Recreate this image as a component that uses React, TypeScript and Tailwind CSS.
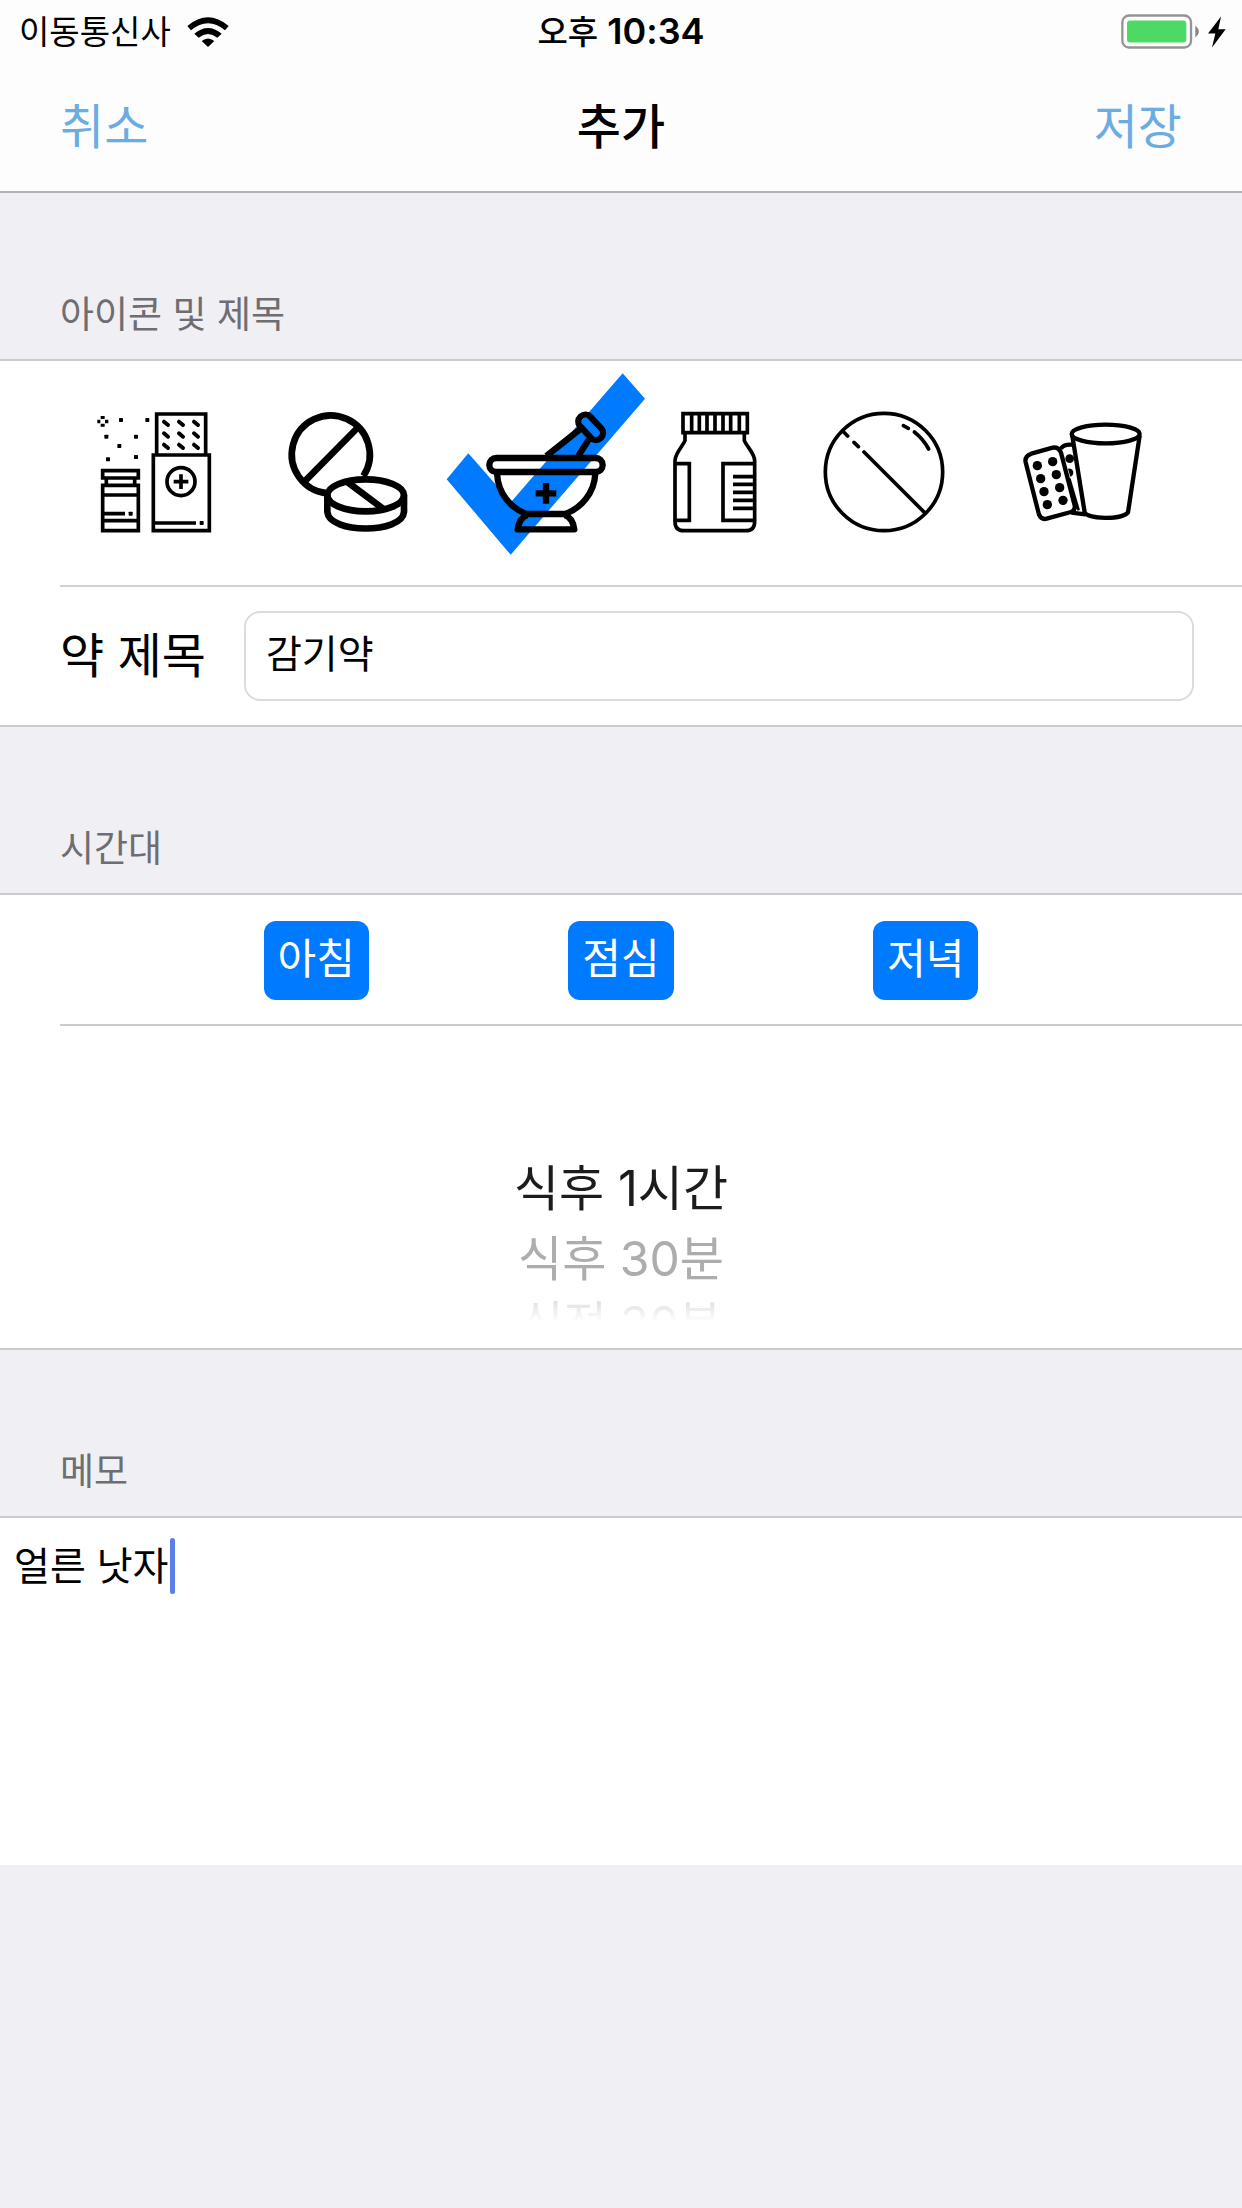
import { useState } from "react";
import type { ReactNode } from "react";

type IconProps = { viewBox: string; width: number; children: ReactNode };

function LineIcon({ viewBox, width, children }: IconProps) {
  return (
    <svg
      viewBox={viewBox}
      className="size-[120px] overflow-visible"
      fill="none"
      stroke="#000"
      strokeWidth={width}
      aria-hidden="true"
    >
      {children}
    </svg>
  );
}

const powderDots = [
  [123, 86],
  [202, 86],
  [79, 136],
  [168, 136],
  [118, 164],
  [84, 204],
  [168, 197],
  [152, 367],
  [365, 395],
];

const blisterDots = [
  [112, 223],
  [158, 211],
  [122, 262],
  [169, 250],
  [132, 301],
  [179, 289],
  [142, 340],
  [189, 327],
];

function MedicineBox() {
  return (
    <LineIcon viewBox="42 62 360 360" width={11}>
      <path d="M230 190V68H377V190M220 191H388V418H220ZM222 395H348" />
      <path d="M68 238H175V260H68ZM79 260V280M164 260V280M68 282H175V418H68ZM68 311H175M68 388H175M70 367H135" />
      <circle cx="303" cy="271" r="42" />
      <path d="M303 249V293M281 271H325" />
      {[96, 131, 165].map((y) =>
        [258, 303, 348].map((x) => (
          <path key={`${x}-${y}`} d={`M${x - 6} ${y - 5}L${x + 6} ${y + 5}`} strokeWidth="12" strokeLinecap="round" />
        )),
      )}
      <g fill="#000" stroke="none">
        {powderDots.map(([x, y]) => (
          <rect key={`${x}-${y}`} x={x - 6} y={y - 6} width="12" height="12" rx="2" />
        ))}
        <path d="M62 74H74V83H62ZM62 97H74V106H62ZM52 85H61V96H52ZM75 85H85V96H75Z" />
      </g>
    </LineIcon>
  );
}

function Tablets() {
  return (
    <LineIcon viewBox="54 62 360 360" width={20}>
      <path d="M172 306A117 117 0 1 1 280 254M104 270L262 110" />
      <ellipse cx="287" cy="312" rx="115" ry="48" />
      <path d="M172 312V362C178 428 396 428 402 362V312M232 272L347 358" />
    </LineIcon>
  );
}

function Mortar({ checked }: { checked: boolean }) {
  return (
    <LineIcon viewBox="138 152 360 360" width={19}>
      {checked && <path d="M548 36L615 112L212 580L20 354L85 276L213 422Z" fill="#007aff" stroke="none" />}
      <rect x="148" y="290" width="340" height="42" rx="21" />
      <path d="M171 336C174 396 211 440 260 458H375C424 440 463 396 466 336" />
      <path d="M262 461C244 467 236 483 233 504H403C400 483 392 467 374 461" strokeLinejoin="round" />
      <path d="M319 284L421 203M415 284L446 235" />
      <path d="M318 365V427M287 396H349" />
      <rect x="-44" y="-21" width="88" height="42" rx="20" transform="translate(452 198) rotate(47)" />
    </LineIcon>
  );
}

function Bottle() {
  return (
    <LineIcon viewBox="15 62 360 360" width={11}>
      <path d="M99 67H292V124H99ZM125 67V124M148 67V124M171 67V124M195 67V124M219 67V124M242 67V124M268 67V124" />
      <path d="M105 126V148C98 165 75 186 75 208V391Q75 418 102 418H287Q314 418 314 391V208C314 186 290 165 283 148V126" />
      <path d="M77 217H118V387H77M312 217H219V387H312M249 256H312M249 279H312M249 303H312M249 327H312M249 351H312" />
    </LineIcon>
  );
}

function RoundPill() {
  return (
    <LineIcon viewBox="522 62 360 360" width={11}>
      <circle cx="702" cy="242" r="176" />
      <g strokeLinecap="round">
        <path d="M578 119L593 134M612 153L625 166M642 182L824 364" />
        <path d="M760 103L775 111M793 122Q819 142 836 173" />
      </g>
    </LineIcon>
  );
}

function CupAndBlister() {
  return (
    <LineIcon viewBox="69 62 360 360" width={13}>
      <path d="M183 172Q190 158 218 160M214 364L256 369" />
      <g fill="#000" stroke="none">
        <circle cx="209" cy="202" r="13" />
        <path d="M204 232A12 12 0 0 1 211 256Z" />
      </g>
      <path
        d="M94 187L158 169Q176 165 183 184L224 342Q227 356 213 362L140 382Q124 386 117 370L77 213Q73 195 94 187Z"
        fill="#fff"
      />
      <path d="M208 262L236 357" strokeWidth="8" />
      <path d="M218 140L254 363C262 384 366 386 384 363L418 140Z" fill="#fff" />
      <ellipse cx="317" cy="128" rx="102" ry="28" fill="#fff" />
      <g fill="#000" stroke="none">
        {blisterDots.map(([x, y]) => (
          <circle key={`${x}-${y}`} cx={x} cy={y} r="14" />
        ))}
      </g>
    </LineIcon>
  );
}

function StatusBar() {
  return (
    <div className="grid grid-cols-3 items-center px-4 pt-2 leading-[46px]">
      <div className="flex items-center gap-4 pl-[3px]">
        <span className="text-[33px]">이동통신사</span>
        <svg viewBox="568 44 124 90" className="h-[30px] w-[42px]" fill="#000" aria-label="Wi-Fi">
          <path d="M568 71Q630 19 692 71L681 84Q630 42 579 84Z" />
          <path d="M589 94Q630 60 671 94L658 106Q630 84 602 106Z" />
          <path d="M611 116Q630 101 649 116L630 134Z" />
        </svg>
      </div>
      <div className="text-center text-[36px] font-semibold">
        <span className="text-[33px] font-medium">오후</span> 10:34
      </div>
      <div className="flex items-center justify-end">
        <svg viewBox="846 38 315 104" className="h-[35px] w-[105px]" aria-label="배터리 충전 중">
          <rect x="850" y="42" width="206" height="96" rx="20" fill="#fff" stroke="#949494" strokeWidth="7" />
          <rect x="864" y="57" width="178" height="66" rx="9" fill="#4cd964" />
          <path d="M1069 72Q1090 90 1069 108Z" fill="#868686" />
          <path d="M1146 45L1107 96H1129L1119 138L1160 83H1138Z" fill="#000" />
        </svg>
      </div>
    </div>
  );
}

function SectionTitle({ id, children }: { id: string; children: ReactNode }) {
  return (
    <h2 id={id} className="px-[60px] pt-[100px] pb-[22px] text-[37px] leading-[44px] text-[#6d6d72]">
      {children}
    </h2>
  );
}

const icons = ["가루약", "알약 두 개", "막자사발", "약병", "둥근 알약", "물약 컵"];
const times = ["아침", "점심", "저녁"];

export default function App() {
  const [icon, setIcon] = useState(2);
  const [title, setTitle] = useState("감기약");
  const [memo, setMemo] = useState("얼른 낫자");
  const [active, setActive] = useState([true, true, true]);
  const drawings = [
    <MedicineBox />,
    <Tablets />,
    <Mortar checked={icon === 2} />,
    <Bottle />,
    <RoundPill />,
    <CupAndBlister />,
  ];

  return (
    <div className="min-h-screen bg-[#efeff4] font-['Inter','Noto_Sans_CJK_KR',sans-serif] text-black">
      <header className="border-b-2 border-[#b2b2b4] bg-[#fdfdfd]">
        <StatusBar />
        <nav className="grid grid-cols-3 items-center px-[60px] pt-10 pb-8 text-[48px] leading-[64px]">
          <button type="button" className="justify-self-start text-[#6bade1]">
            취소
          </button>
          <h1 className="text-center font-medium">추가</h1>
          <button type="button" className="justify-self-end text-[#6bade1]">
            저장
          </button>
        </nav>
      </header>

      <main>
        <section aria-labelledby="icon-title">
          <SectionTitle id="icon-title">아이콘 및 제목</SectionTitle>
          <div className="border-y-2 border-[#cbcacf] bg-white">
            <div className="grid grid-cols-[194fr_194fr_202fr_136fr_202fr_196fr] pt-[51px] pr-[61px] pb-[53px] pl-[57px]">
              {drawings.map((drawing, i) => (
                <button
                  key={icons[i]}
                  type="button"
                  aria-label={icons[i]}
                  aria-pressed={icon === i}
                  onClick={() => setIcon(i)}
                  className="flex justify-center"
                >
                  {drawing}
                </button>
              ))}
            </div>
            <div className="ml-[60px] flex items-center gap-[38px] border-t-2 border-[#d2d2d4] py-6 pr-12">
              <label htmlFor="medicine" className="text-[48px] leading-[64px]">
                약 제목
              </label>
              <input
                id="medicine"
                value={title}
                onChange={(e) => setTitle(e.target.value)}
                className="h-[90px] min-w-0 flex-1 rounded-2xl border-2 border-[#dcdcdc] bg-white px-5 pb-[10px] text-[39px] outline-none"
              />
            </div>
          </div>
        </section>

        <section aria-labelledby="time-title">
          <SectionTitle id="time-title">시간대</SectionTitle>
          <div className="border-y-2 border-[#cbcacf] bg-white">
            <div className="flex justify-evenly px-16 pt-[26px] pb-6">
              {times.map((time, i) => (
                <button
                  key={time}
                  type="button"
                  aria-pressed={active[i]}
                  onClick={() => setActive(active.map((on, j) => (j === i ? !on : on)))}
                  className="rounded-xl bg-[#007aff] px-[14px] pt-2 pb-[11px] text-[42px] leading-[60px] text-white"
                >
                  {time}
                </button>
              ))}
            </div>
            <div className="ml-[60px] border-t-2 border-[#cbcacf] pr-[60px]">
              <ul
                role="listbox"
                aria-label="복용 시간"
                className="h-[322px] overflow-hidden pt-[127px] text-center [mask-image:linear-gradient(to_bottom,black_262px,transparent_296px)]"
              >
                <li role="option" aria-selected="true" className="text-[49px] leading-[72px] text-[#1c1c1c]">
                  식후 1시간
                </li>
                <li role="option" aria-selected="false" className="text-[48px] leading-[68px] text-[#adadad]">
                  식후 30분
                </li>
                <li role="option" aria-selected="false" className="text-[47px] leading-[60px] text-[#cdcdcd]">
                  식전 30분
                </li>
              </ul>
            </div>
          </div>
        </section>

        <section aria-labelledby="memo-title">
          <SectionTitle id="memo-title">메모</SectionTitle>
          <div className="relative border-t-2 border-[#cbcacf] bg-white">
            <textarea
              aria-labelledby="memo-title"
              value={memo}
              onChange={(e) => setMemo(e.target.value)}
              className="block h-[347px] w-full resize-none px-[14px] py-5 text-[39px] leading-[56px] caret-transparent outline-none"
            />
            <span className="absolute top-5 left-[170px] h-14 w-[5px] rounded-sm bg-[#5b7ee8]" />
          </div>
        </section>
      </main>
    </div>
  );
}
